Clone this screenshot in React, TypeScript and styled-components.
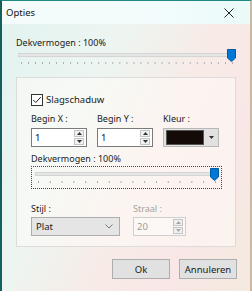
import React from 'react';
import styled, { createGlobalStyle } from 'styled-components';

const GlobalStyle = createGlobalStyle`
    html, body {
        margin: 0;
        padding: 0;
        width: 252px;
        height: 291px;
        overflow: hidden;
    }
    body {
        font-family: 'Noto Sans', 'Liberation Sans', sans-serif;
        font-size: 9px;
        color: #1a1a1a;
    }
`;

function Slider(props: { ticks: number; focused?: boolean; width: number }): React.ReactElement {
    return (
        <SliderBox $focused={props.focused} style={{ width: props.width }}>
            <Track>
                <Thumb viewBox="0 0 9 13">
                    <path d="M0.5 0.5H8.5V9L4.5 12.5L0.5 9Z" fill="#0078d7" stroke="#005a9e" />
                </Thumb>
            </Track>
            <Ticks $count={props.ticks} />
        </SliderBox>
    );
}

function SpinInput(props: { value: string; disabled?: boolean; width: number }): React.ReactElement {
    const arrow = props.disabled ? '#a8a8a8' : '#333';
    return (
        <Spin $disabled={props.disabled} style={{ width: props.width }}>
            <SpinValue>{props.value}</SpinValue>
            <SpinButtons>
                <SpinButton>
                    <svg width="5" height="3" viewBox="0 0 5 3">
                        <path d="M0 3L2.5 0L5 3Z" fill={arrow} />
                    </svg>
                </SpinButton>
                <SpinButton>
                    <svg width="5" height="3" viewBox="0 0 5 3">
                        <path d="M0 0L2.5 3L5 0Z" fill={arrow} />
                    </svg>
                </SpinButton>
            </SpinButtons>
        </Spin>
    );
}

export default function App(): React.ReactElement {
    return (
        <>
            <GlobalStyle />
            <Window>
                <TitleBar>
                    <Title>Opties</Title>
                    <Close>
                        <svg width="10" height="10" viewBox="0 0 10 10">
                            <path d="M0.5 0.5L9.5 9.5M9.5 0.5L0.5 9.5" stroke="#222" strokeWidth="1" />
                        </svg>
                    </Close>
                </TitleBar>

                <Body>
                    <Label $below={0}>Dekvermogen : 100%</Label>
                    <Slider ticks={31} width={222} />

                    <Group>
                        <CheckRow>
                            <CheckBox>
                                <svg width="10" height="10" viewBox="0 0 10 10">
                                    <path d="M1.3 5L3.8 7.6L8.8 2" stroke="#222" strokeWidth="1" fill="none" />
                                </svg>
                            </CheckBox>
                            Slagschaduw
                        </CheckRow>

                        <FieldRow $top={7}>
                            <Field>
                                <Label $below={3}>Begin X :</Label>
                                <SpinInput value="1" width={56} />
                            </Field>
                            <Field>
                                <Label $below={3}>Begin Y :</Label>
                                <SpinInput value="1" width={56} />
                            </Field>
                            <Field>
                                <Label $below={3}>Kleur :</Label>
                                <ColorCombo>
                                    <Swatch />
                                    <ComboArrow>
                                        <svg width="5" height="3" viewBox="0 0 5 3">
                                            <path d="M0 0L2.5 3L5 0Z" fill="#333" />
                                        </svg>
                                    </ComboArrow>
                                </ColorCombo>
                            </Field>
                        </FieldRow>

                        <InnerSection>
                            <Label $below={1}>Dekvermogen : 100%</Label>
                            <Slider ticks={16} width={191} focused />
                        </InnerSection>

                        <FieldRow $top={14} $gap={13}>
                            <Field>
                                <Label>Stijl :</Label>
                                <Select>
                                    Plat
                                    <svg width="8" height="5" viewBox="0 0 8 5">
                                        <path d="M0.5 0.5L4 4L7.5 0.5" stroke="#777" fill="none" />
                                    </svg>
                                </Select>
                            </Field>
                            <Field>
                                <Label $disabled>Straal :</Label>
                                <SpinInput value="20" width={53} disabled />
                            </Field>
                        </FieldRow>
                    </Group>

                    <Footer>
                        <Button>Ok</Button>
                        <Button>Annuleren</Button>
                    </Footer>
                </Body>
            </Window>
        </>
    );
}

const Window = styled.div`
    box-sizing: border-box;
    width: 252px;
    height: 291px;
    border-top: 1px solid #1f8a80;
    border-left: 2px solid #15605c;
    border-right: 2px solid #c9b9a3;
    background: linear-gradient(115deg, #e2f3f0 0%, #edf5f1 35%, #f7ebe7 58%, #f8e7e6 78%, #f4eadf 100%);
    display: flex;
    flex-direction: column;
`;

const TitleBar = styled.div`
    height: 23px;
    display: flex;
    align-items: center;
    justify-content: space-between;
    padding: 0 16px 0 4px;
    background: linear-gradient(90deg, #f4fbfa 0%, #f3fcfc 60%, #eafaf9 100%);
`;

const Title = styled.span`
    font-size: 9.5px;
    color: #111;
`;

const Close = styled.span`
    display: flex;
    align-items: center;
`;

const Body = styled.div`
    display: flex;
    flex-direction: column;
    padding: 13px 0 0 14px;
`;

const Label = styled.div<{ $disabled?: boolean; $below?: number }>`
    font-size: 9px;
    line-height: 12px;
    height: 12px;
    color: ${p => (p.$disabled ? '#a3a3a3' : '#1a1a1a')};
    margin-bottom: ${p => p.$below ?? 2}px;
`;

const SliderBox = styled.div<{ $focused?: boolean }>`
    box-sizing: border-box;
    height: ${p => (p.$focused ? 23 : 16)}px;
    padding: ${p => (p.$focused ? '5px 3px 0 3px' : '3px 2px 0 1px')};
    border: 1px dotted ${p => (p.$focused ? '#444' : 'transparent')};
    display: flex;
    flex-direction: column;
`;

const Track = styled.div`
    position: relative;
    height: 2px;
    background: #e6e6e6;
    border: 1px solid #d4d4d4;
`;

const Thumb = styled.svg`
    position: absolute;
    right: -2px;
    top: -5px;
    width: 9px;
    height: 13px;
`;

const Ticks = styled.div<{ $count: number }>`
    margin-top: 5px;
    height: 2px;
    background-image: linear-gradient(90deg, #a8a8a8 1px, transparent 1px);
    background-size: calc((100% - 1px) / ${p => p.$count - 1}) 2px;
    background-repeat: repeat-x;
    margin-left: 3px;
    margin-right: 2px;
`;

const Group = styled.div`
    box-sizing: border-box;
    width: 220px;
    height: 170px;
    margin-top: 12px;
    border: 1px solid #dcdcdc;
    background: rgba(255, 252, 248, 0.55);
    padding: 15px 0 0 14px;
    display: flex;
    flex-direction: column;
`;

const CheckRow = styled.label`
    display: flex;
    align-items: center;
    gap: 3px;
    height: 13px;
    font-size: 9.5px;
`;

const CheckBox = styled.span`
    box-sizing: border-box;
    width: 12px;
    height: 12px;
    border: 1px solid #333;
    background: #fff;
    display: flex;
    align-items: center;
    justify-content: center;
`;

const FieldRow = styled.div<{ $gap?: number; $top: number }>`
    display: flex;
    gap: ${p => p.$gap ?? 10}px;
    margin-top: ${p => p.$top}px;
`;

const Field = styled.div`
    display: flex;
    flex-direction: column;
`;

const Spin = styled.div<{ $disabled?: boolean }>`
    box-sizing: border-box;
    height: 19px;
    border: 1px solid ${p => (p.$disabled ? '#cfcfcf' : '#7a7a7a')};
    background: ${p => (p.$disabled ? 'rgba(255,255,255,0.4)' : '#fff')};
    color: ${p => (p.$disabled ? '#9a9a9a' : '#111')};
    display: flex;
    align-items: center;
    justify-content: space-between;
    padding-left: 3px;
`;

const SpinValue = styled.span`
    font-size: 9.5px;
`;

const SpinButtons = styled.div`
    display: flex;
    flex-direction: column;
    gap: 1px;
    padding: 1px 2px 1px 1px;
`;

const SpinButton = styled.div`
    box-sizing: border-box;
    width: 10px;
    height: 7px;
    border: 1px solid #c4c4c4;
    background: #f0f0f0;
    display: flex;
    align-items: center;
    justify-content: center;
`;

const ColorCombo = styled.div`
    box-sizing: border-box;
    width: 56px;
    height: 19px;
    border: 1px solid #b8b8b8;
    background: #e1e1e1;
    display: flex;
    align-items: center;
    padding: 2px;
    gap: 2px;
`;

const Swatch = styled.div`
    flex: 1;
    height: 13px;
    background: #140b08;
    border: 1px solid #555;
`;

const ComboArrow = styled.div`
    width: 10px;
    display: flex;
    justify-content: center;
`;

const InnerSection = styled.div`
    margin-top: 6px;
    display: flex;
    flex-direction: column;
`;

const Select = styled.div`
    box-sizing: border-box;
    width: 89px;
    height: 19px;
    border: 1px solid #adadad;
    background: #e5e5e5;
    display: flex;
    align-items: center;
    justify-content: space-between;
    padding: 0 6px 0 4px;
    font-size: 9.5px;
`;

const Footer = styled.div`
    display: flex;
    justify-content: flex-end;
    gap: 9px;
    width: 221px;
    margin-top: 12px;
`;

const Button = styled.button`
    box-sizing: border-box;
    width: 58px;
    height: 20px;
    border: 1px solid #adadad;
    background: #e1e1e1;
    font-family: 'Noto Sans', 'Liberation Sans', sans-serif;
    font-size: 9.5px;
    color: #1a1a1a;
    padding: 0;
`;
